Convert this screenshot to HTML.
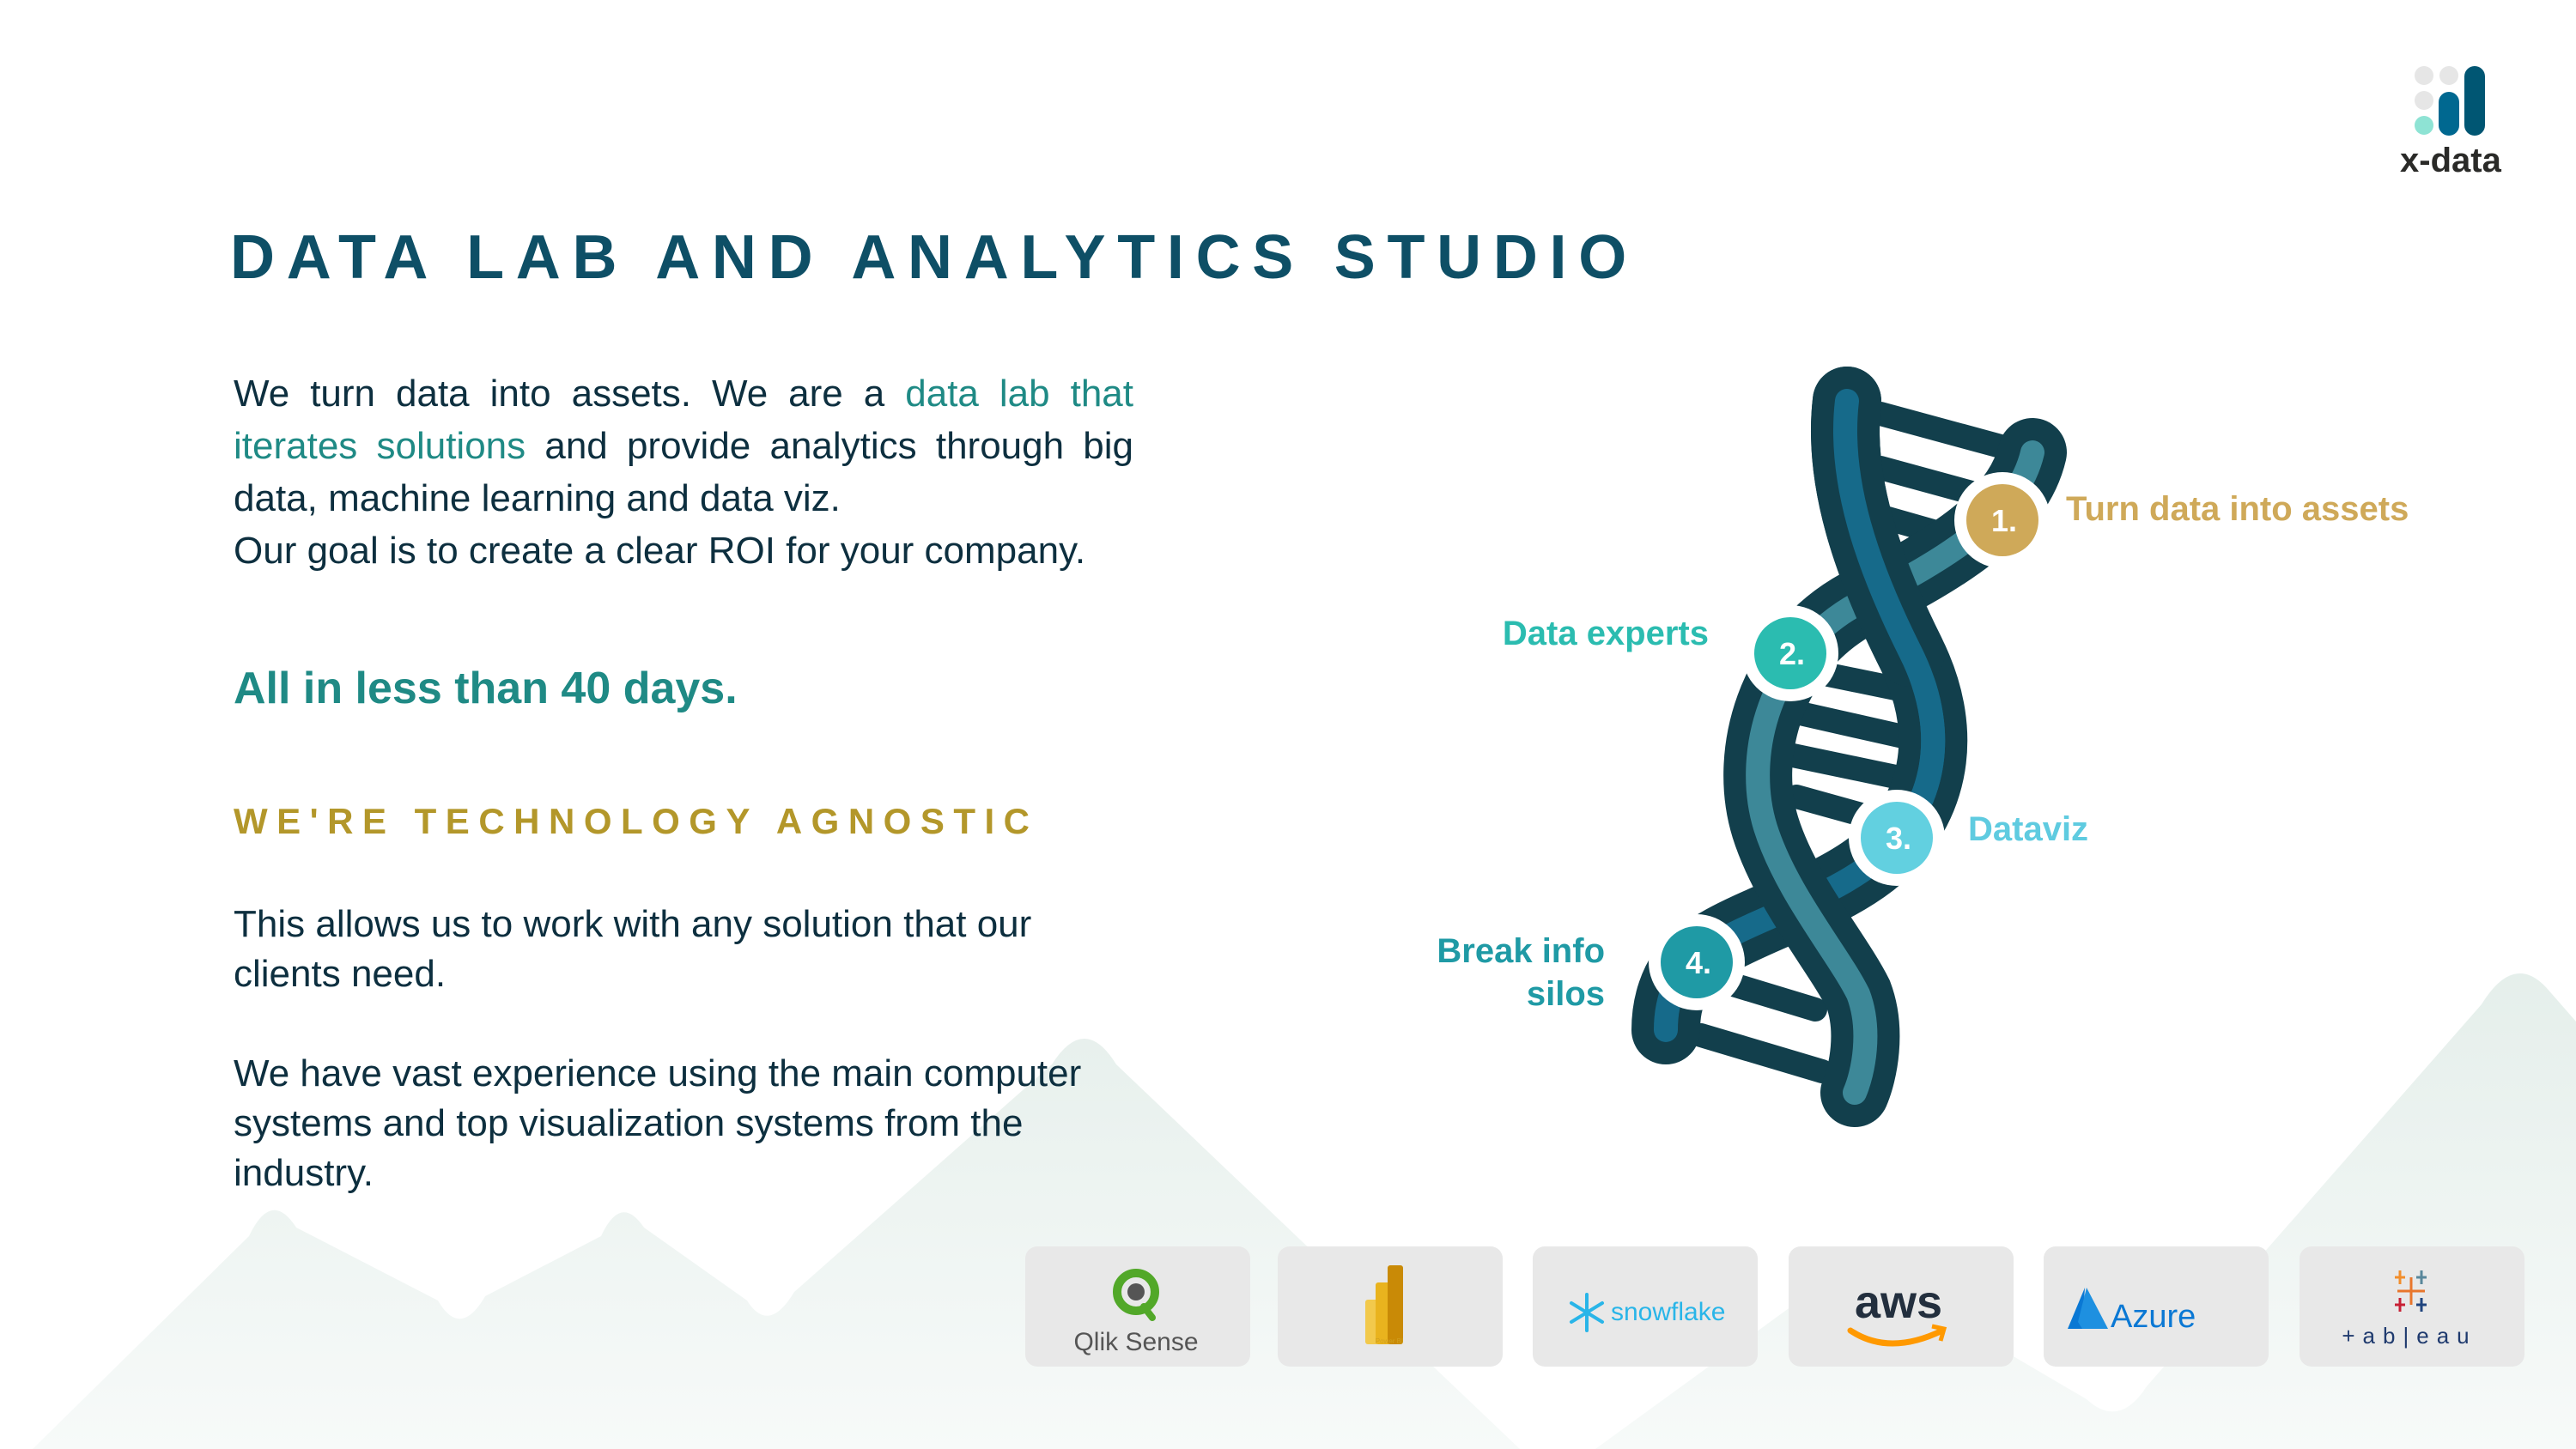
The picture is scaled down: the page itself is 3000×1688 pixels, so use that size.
<!DOCTYPE html>
<html><head><meta charset="utf-8"><style>
*{margin:0;padding:0;box-sizing:border-box}
body{width:3000px;height:1688px;background:#fff;position:relative;overflow:hidden;font-family:"Liberation Sans",sans-serif}
.a{position:absolute;white-space:nowrap}
.p{color:#0d2f3f;font-size:44px;line-height:61px}
.lbl{font-weight:bold;font-size:40px;line-height:50px}
.box{position:absolute;top:1452px;width:262px;height:140px;background:#e8e8e8;border-radius:14px}
</style></head><body>
<svg class="a" style="left:0;top:0" width="3000" height="1688">
<defs><linearGradient id="g" x1="0" y1="1100" x2="0" y2="1688" gradientUnits="userSpaceOnUse"><stop offset="0" stop-color="#e4eeea"/><stop offset="1" stop-color="#f7faf9"/></linearGradient></defs>
<path fill="url(#g)" d="M38 1688 L290 1440 Q316 1385 345 1430 L510 1515 Q536 1560 565 1510 L700 1440 Q723 1390 750 1430 L870 1515 Q895 1555 925 1505 L1225 1240 Q1263 1180 1300 1240 L1770 1688 Z"/>
<path fill="url(#g)" d="M1858 1688 L2130 1490 Q2165 1440 2200 1495 L2430 1630 Q2468 1665 2500 1615 L2890 1170 Q2927 1110 2965 1150 L3000 1190 L3000 1688 Z"/>
<g stroke-linecap="round" fill="none">
<g stroke="#123f4c" stroke-width="28">
<line x1="2190" y1="482" x2="2330" y2="520"/>
<line x1="2190" y1="545" x2="2318" y2="580"/>
<line x1="2195" y1="603" x2="2290" y2="630"/>
<line x1="2100" y1="780" x2="2222" y2="805"/>
<line x1="2092" y1="830" x2="2225" y2="860"/>
<line x1="2088" y1="880" x2="2222" y2="908"/>
<line x1="2092" y1="928" x2="2200" y2="958"/>
<line x1="2005" y1="1143" x2="2114" y2="1176"/>
<line x1="1981" y1="1206" x2="2122" y2="1248"/>
</g>
<path stroke="#123f4c" stroke-width="80" d="M2151 467 C2140 560 2175 660 2225 760 C2275 860 2250 950 2180 1006 C2110 1060 2000 1080 1960 1130 C1940 1160 1940 1190 1940 1200"/>
<path stroke="#166a8a" stroke-width="28" d="M2151 467 C2140 560 2175 660 2225 760 C2275 860 2250 950 2180 1006 C2110 1060 2000 1080 1960 1130 C1940 1160 1940 1190 1940 1200"/>
<path stroke="#123f4c" stroke-width="80" d="M2367 527 C2350 600 2270 650 2164 703 C2060 760 2030 880 2056 964 C2080 1040 2140 1110 2164 1158 C2180 1200 2170 1250 2160 1273"/>
<path stroke="#3d8898" stroke-width="28" d="M2367 527 C2350 600 2270 650 2164 703 C2060 760 2030 880 2056 964 C2080 1040 2140 1110 2164 1158 C2180 1200 2170 1250 2160 1273"/>
<path stroke="#123f4c" stroke-width="80" d="M2151 467 C2140 560 2175 660 2225 760"/>
<path stroke="#166a8a" stroke-width="28" d="M2151 467 C2140 560 2175 660 2225 760 C2275 860 2250 950 2180 1006"/>
</g>
<g font-family="Liberation Sans" font-weight="bold" font-size="36" fill="#fff" text-anchor="middle">
<circle cx="2332" cy="606" r="56" fill="#fff"/><circle cx="2332" cy="606" r="42" fill="#cfa959"/><text x="2334" y="619">1.</text>
<circle cx="2085" cy="761" r="56" fill="#fff"/><circle cx="2085" cy="761" r="42" fill="#2bbcb0"/><text x="2087" y="774">2.</text>
<circle cx="2209" cy="976" r="56" fill="#fff"/><circle cx="2209" cy="976" r="42" fill="#62d0e0"/><text x="2211" y="989">3.</text>
<circle cx="1976" cy="1121" r="56" fill="#fff"/><circle cx="1976" cy="1121" r="42" fill="#1f9aa5"/><text x="1978" y="1134">4.</text>
</g>
<circle cx="2823" cy="88" r="11" fill="#e6e6e6"/><circle cx="2852" cy="88" r="11" fill="#e6e6e6"/><circle cx="2823" cy="117" r="11" fill="#e6e6e6"/><circle cx="2823" cy="146" r="11" fill="#8ee3d4"/>
<rect x="2840" y="107" width="24" height="51" rx="12" fill="#006890"/>
<rect x="2870" y="77" width="24" height="81" rx="12" fill="#005673"/>
<text x="2795" y="200" font-family="Liberation Sans" font-weight="bold" font-size="40" fill="#2a2a28">x-data</text>
</svg>

<div class="a" style="left:268px;top:258px;font-size:72px;font-weight:bold;color:#0e4f66;letter-spacing:13.7px;line-height:84px">DATA LAB AND ANALYTICS STUDIO</div>

<div class="a p" style="left:272px;top:428px;width:1048px;text-align:justify;text-align-last:justify">We turn data into assets. We are a <span style="color:#1f8a85">data lab that</span></div>
<div class="a p" style="left:272px;top:489px;width:1048px;text-align:justify;text-align-last:justify"><span style="color:#1f8a85">iterates solutions</span> and provide analytics through big</div>
<div class="a p" style="left:272px;top:550px">data, machine learning and data viz.</div>
<div class="a p" style="left:272px;top:611px">Our goal is to create a clear ROI for your company.</div>

<div class="a" style="left:272px;top:770px;font-size:52px;font-weight:bold;color:#1f8a85;line-height:64px">All in less than 40 days.</div>

<div class="a" style="left:272px;top:930px;font-size:42px;font-weight:bold;color:#b3972a;letter-spacing:10.5px;line-height:54px">WE'RE TECHNOLOGY AGNOSTIC</div>

<div class="a p" style="left:272px;top:1048px;line-height:58px">This allows us to work with any solution that our<br>clients need.</div>
<div class="a p" style="left:272px;top:1222px;line-height:58px">We have vast experience using the main computer<br>systems and top visualization systems from the<br>industry.</div>

<div class="a lbl" style="left:2406px;top:568px;color:#cfa959">Turn data into assets</div>
<div class="a lbl" style="right:1010px;top:713px;color:#2bbcb0">Data experts</div>
<div class="a lbl" style="left:2292px;top:941px;color:#5fcbe0">Dataviz</div>
<div class="a lbl" style="right:1131px;top:1083px;color:#1f9aa5;text-align:right">Break info<br>silos</div>

<div class="box" style="left:1194px"></div>
<div class="box" style="left:1488px"></div>
<div class="box" style="left:1785px"></div>
<div class="box" style="left:2083px"></div>
<div class="box" style="left:2380px"></div>
<div class="box" style="left:2678px"></div>

<svg class="a" style="left:0;top:0" width="3000" height="1688">
<circle cx="1323" cy="1505" r="22" fill="none" stroke="#52a829" stroke-width="10"/><circle cx="1323" cy="1505" r="10" fill="#555"/>
<path d="M1332 1522 L1342 1535" stroke="#52a829" stroke-width="8" stroke-linecap="round"/>
<text x="1323" y="1573" font-family="Liberation Sans" font-size="30" fill="#555" text-anchor="middle">Qlik Sense</text>
<rect x="1590" y="1514" width="16" height="52" rx="3" fill="#f2c94c"/>
<rect x="1602" y="1494" width="18" height="72" rx="3" fill="#e9b31e"/>
<rect x="1616" y="1474" width="18" height="92" rx="3" fill="#c98a06"/>
<text x="1618" y="1565" font-family="Liberation Sans" font-size="8" fill="#d0a020" text-anchor="middle">Power BI</text>
<g stroke="#29b5e8" stroke-width="4" stroke-linecap="round"><line x1="1848" y1="1508" x2="1848" y2="1550"/><line x1="1830" y1="1518" x2="1866" y2="1540"/><line x1="1830" y1="1540" x2="1866" y2="1518"/></g>
<text x="1876" y="1538" font-family="Liberation Sans" font-size="30" fill="#29b5e8">snowflake</text>
<text x="2211" y="1535" font-family="Liberation Sans" font-weight="bold" font-size="54" fill="#232f3e" text-anchor="middle">aws</text>
<path d="M2155 1550 Q2200 1580 2262 1550" fill="none" stroke="#ff9900" stroke-width="7" stroke-linecap="round"/>
<path d="M2250 1545 L2264 1548 L2260 1562" fill="none" stroke="#ff9900" stroke-width="5"/>
<path d="M2428 1500 L2408 1548 L2425 1548 Z" fill="#0a78d4"/><path d="M2430 1500 L2455 1548 L2425 1548 L2420 1540 Z" fill="#1e90e0"/>
<text x="2458" y="1546" font-family="Liberation Sans" font-size="38" fill="#0a78d4">Azure</text>
<g stroke-width="3"><line x1="2808" y1="1488" x2="2808" y2="1520" stroke="#e8762c"/><line x1="2792" y1="1504" x2="2824" y2="1504" stroke="#e8762c"/>
<line x1="2795" y1="1480" x2="2795" y2="1496" stroke="#f28e2b"/><line x1="2789" y1="1488" x2="2801" y2="1488" stroke="#f28e2b"/>
<line x1="2820" y1="1480" x2="2820" y2="1496" stroke="#59879b"/><line x1="2814" y1="1488" x2="2826" y2="1488" stroke="#59879b"/>
<line x1="2795" y1="1512" x2="2795" y2="1528" stroke="#c72035"/><line x1="2789" y1="1520" x2="2801" y2="1520" stroke="#c72035"/>
<line x1="2820" y1="1512" x2="2820" y2="1528" stroke="#1f447e"/><line x1="2814" y1="1520" x2="2826" y2="1520" stroke="#1f447e"/></g>
<text x="2806" y="1565" font-family="Liberation Sans" font-size="26" fill="#1f3a6e" text-anchor="middle" letter-spacing="9">+ab|eau</text>
</svg>
</body></html>
